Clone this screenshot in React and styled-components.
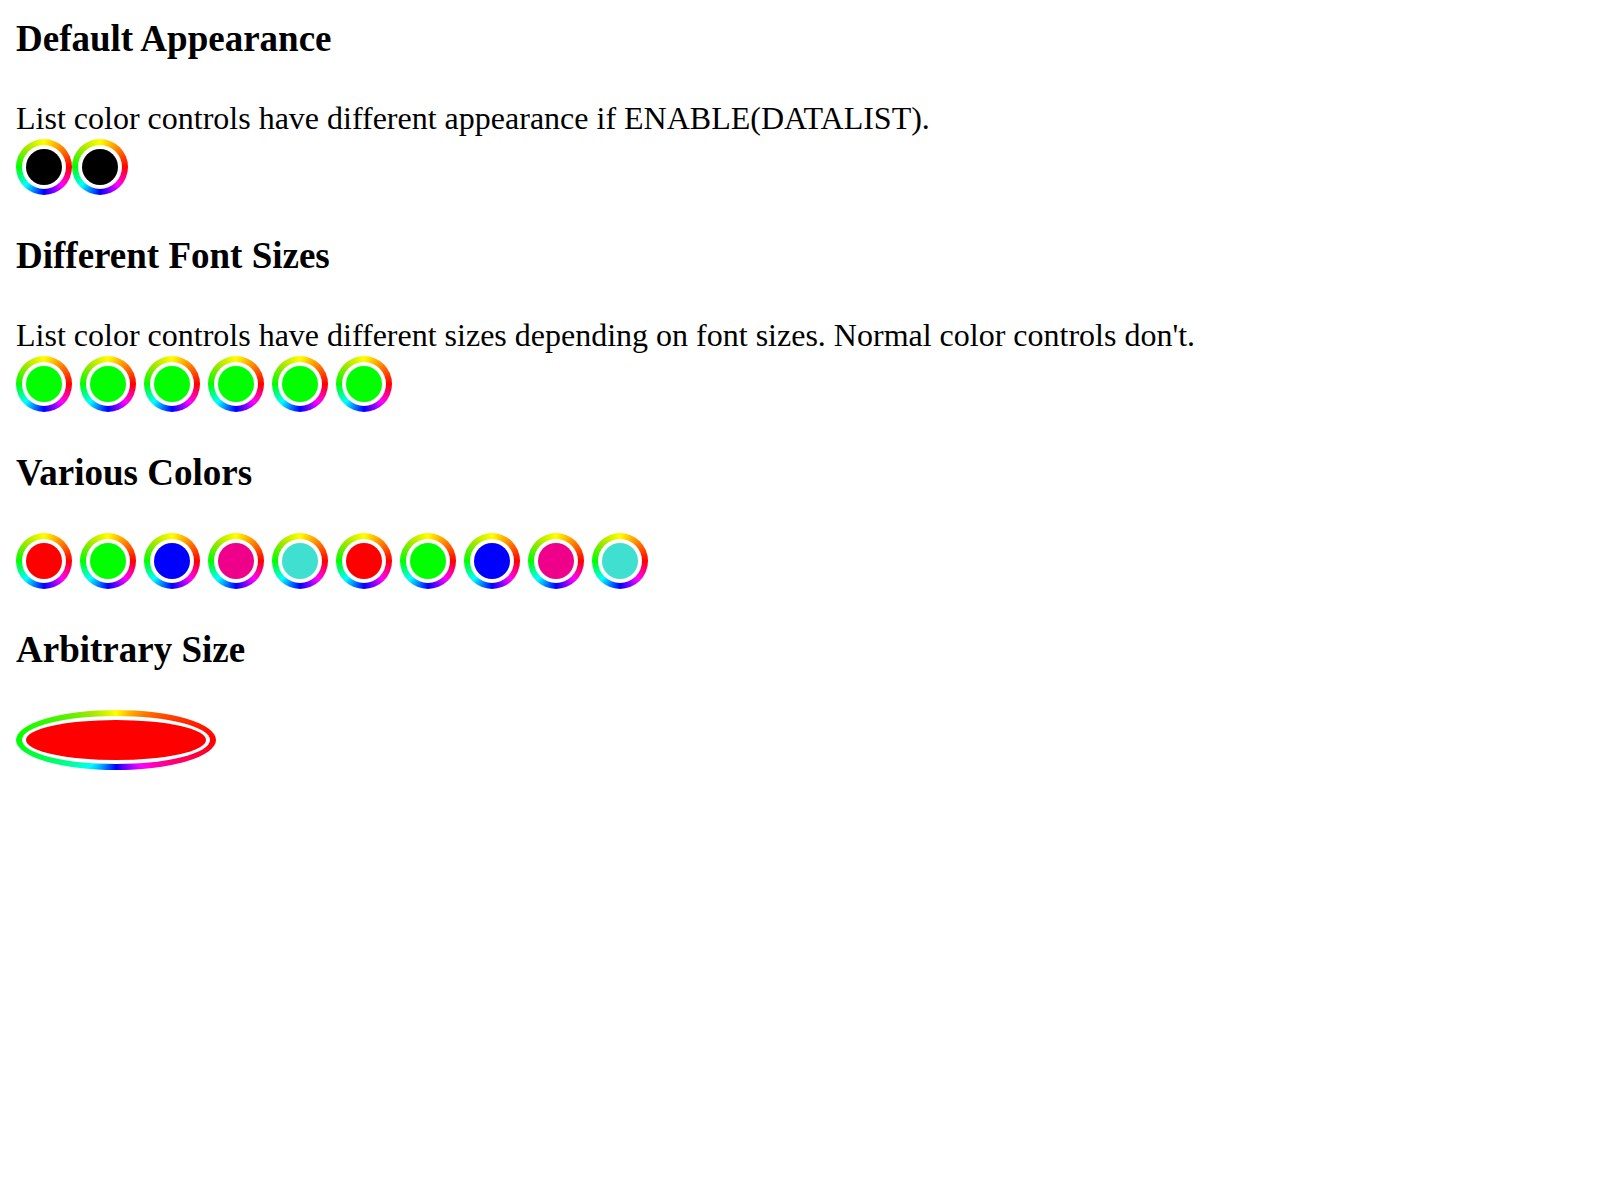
import React from "react";
import styled, { createGlobalStyle } from "styled-components";

const GlobalStyle = createGlobalStyle`
  body {
    margin: 0;
    background: #fff;
    color: #000;
    font-family: "Liberation Serif", "Times New Roman", Times, serif;
    font-size: 32px;
    line-height: 38px;
  }
`;

const Page = styled.main`
  display: flex;
  flex-direction: column;
  gap: 38px;
  padding: 16px;
`;

const Section = styled.section`
  display: flex;
  flex-direction: column;
`;

const Heading = styled.h3`
  margin: 0 0 38px;
  font-size: 37px;
  line-height: 45px;
`;

const Description = styled.p`
  margin: 0 0 2px;
`;

const Row = styled.div`
  display: flex;
  flex-wrap: wrap;
  gap: ${({ $gap }) => $gap}px;
`;

const ColorWell = styled.input.attrs({ type: "color" })`
  appearance: none;
  box-sizing: border-box;
  flex: none;
  width: ${({ $width }) => $width || 56}px;
  height: ${({ $height }) => $height || 56}px;
  margin: 0;
  padding: 6px;
  border: 0;
  border-radius: 50%;
  background: conic-gradient(
    from 90deg,
    #f00,
    #f0f 45deg,
    #00f 90deg,
    #0ff 135deg,
    #0f0 180deg,
    #a0e600 225deg,
    #ff0 270deg,
    #f00
  );
  cursor: pointer;

  &::-webkit-color-swatch-wrapper {
    box-sizing: border-box;
    padding: 4px;
    border-radius: 50%;
    background: #fff;
  }

  &::-webkit-color-swatch {
    border: 0;
    border-radius: 50%;
  }
`;

const palette = [
  ["Red", "#ff0000"],
  ["Lime", "#00ff00"],
  ["Blue", "#0000ff"],
  ["Pink", "#ee008b"],
  ["Turquoise", "#40e0d0"],
];

const defaults = [["Default", "#000000"], ["Default list", "#000000"]];

const fontSizes = [1, 2, 3, 4, 5, 6].map((n) => [`Font size ${n}`, "#00ff00"]);

const various = [
  ...palette,
  ...palette.map(([name, value]) => [`${name} list`, value]),
];

function Wells({ items, gap }) {
  return (
    <Row $gap={gap}>
      {items.map(([name, value]) => (
        <ColorWell key={name} aria-label={name} defaultValue={value} />
      ))}
    </Row>
  );
}

export default function App() {
  return (
    <>
      <GlobalStyle />
      <Page>
        <Section>
          <Heading>Default Appearance</Heading>
          <Description>
            List color controls have different appearance if ENABLE(DATALIST).
          </Description>
          <Wells items={defaults} gap={0} />
        </Section>
        <Section>
          <Heading>Different Font Sizes</Heading>
          <Description>
            List color controls have different sizes depending on font sizes.
            Normal color controls don't.
          </Description>
          <Wells items={fontSizes} gap={8} />
        </Section>
        <Section>
          <Heading>Various Colors</Heading>
          <Wells items={various} gap={8} />
        </Section>
        <Section>
          <Heading>Arbitrary Size</Heading>
          <Row $gap={8}>
            <ColorWell
              aria-label="Arbitrary size"
              defaultValue="#ff0000"
              $width={200}
              $height={60}
            />
          </Row>
        </Section>
      </Page>
    </>
  );
}
